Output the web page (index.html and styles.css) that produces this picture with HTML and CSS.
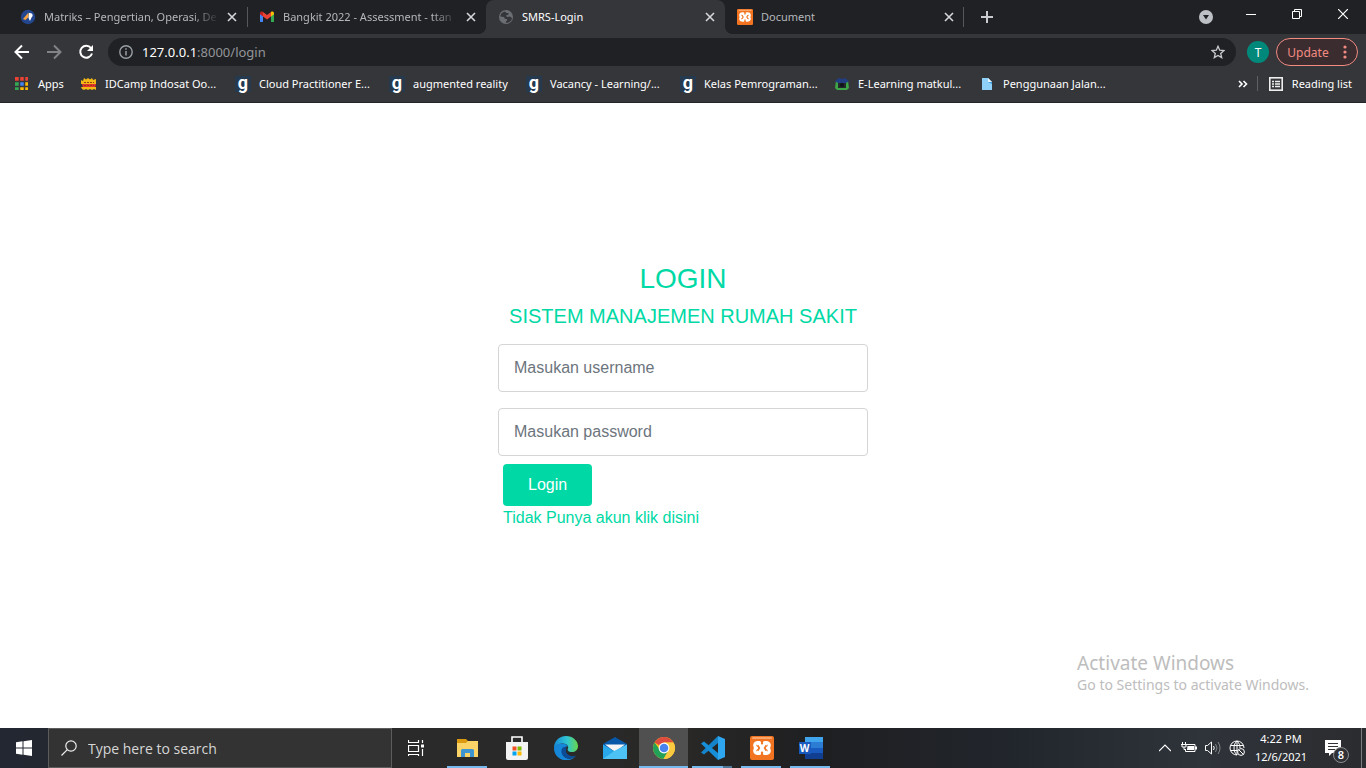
FILE: index.html
```html
<!DOCTYPE html>
<html lang="id">
<head>
<meta charset="utf-8">
<meta name="viewport" content="width=device-width, initial-scale=1">
<title>SMRS-Login</title>
<link rel="stylesheet" href="styles.css">
</head>
<body>
<svg class="defs" aria-hidden="true">
  <symbol id="close" viewBox="0 0 10 10"><path d="M1 1l8 8M9 1l-8 8" fill="none" stroke="currentColor" stroke-width="1.6"/></symbol>
  <symbol id="xampp" viewBox="0 0 24 24">
    <rect width="24" height="24" rx="2" fill="#f27421"/><rect x="2" y="1" width="20" height="2" rx="1" fill="#f9a66c"/>
    <path d="M8 7.200L16 16.800M16 7.200L8 16.800" stroke="#fff" stroke-width="4"/>
    <path d="M9.500 6.500H8C4 6.500 4 11 6.500 12C4 13 4 17.500 8 17.500H9.500M14.500 6.500H16C20 6.500 20 11 17.500 12C20 13 20 17.500 16 17.500H14.500" fill="none" stroke="#fff" stroke-width="3.200" stroke-linecap="round" stroke-linejoin="round"/>
    <path d="M8 9.500L9.500 12L8 14.500M16 9.500L14.500 12L16 14.500" fill="none" stroke="#f27421" stroke-width="1.400" stroke-linecap="round"/>
  </symbol>
</svg>

<header class="browser">
  <div class="tabstrip">
    <div class="tab">
      <svg class="icon16" viewBox="0 0 16 16"><circle cx="8" cy="8" r="7.200" fill="#23478f"/><path d="M3 10L8.500 3.500V8L5.500 11z" fill="#f7a440"/><path d="M9 4c4-.5 4.500 3 2.500 4.500L10 12 8.500 9z" fill="#fff"/></svg>
      <span class="tab-title tab-title--fade">Matriks – Pengertian, Operasi, De</span>
      <button class="tab-close" aria-label="Close tab"><svg class="icon10"><use href="#close"/></svg></button>
    </div>
    <div class="tab tab--split">
      <svg class="icon16" viewBox="0 0 16 16"><path d="M1 4v9h3V6z" fill="#4285f4"/><path d="M12 6v7h3V4z" fill="#34a853"/><path d="M1 4.500C1 2.500 3 2.200 4 3v4.500L1 5.200z" fill="#c5221f"/><path d="M15 4.500C15 2.500 13 2.200 12 3v4.500l3-2.300z" fill="#fbbc04"/><path d="M4 3l4 3 4-3v4.500l-4 3-4-3z" fill="#ea4335"/></svg>
      <span class="tab-title tab-title--fade">Bangkit 2022 - Assessment - ttan</span>
      <button class="tab-close" aria-label="Close tab"><svg class="icon10"><use href="#close"/></svg></button>
    </div>
    <div class="tab tab--active">
      <svg class="icon16" viewBox="0 0 16 16"><circle cx="8" cy="8" r="7" fill="#6b6e73"/><path d="M7 2.500C4 3 2.500 5 2.300 7.500L6 8l1 2h2v1.500L7.500 13l1 1c3-.2 5.300-2 5.500-5l-2-1.500L9 8 8 6.500l2.500-1V4H8.500z" fill="#35363a"/><path d="M3 8.500L6.500 12v1.500" stroke="#6b6e73" fill="none"/></svg>
      <span class="tab-title">SMRS-Login</span>
      <button class="tab-close" aria-label="Close tab"><svg class="icon10"><use href="#close"/></svg></button>
    </div>
    <div class="tab tab--last">
      <svg class="icon16"><use href="#xampp"/></svg>
      <span class="tab-title">Document</span>
      <button class="tab-close" aria-label="Close tab"><svg class="icon10"><use href="#close"/></svg></button>
    </div>
    <button class="new-tab" aria-label="New tab"><svg class="icon12" viewBox="0 0 12 12"><path d="M6 0v12M0 6h12" stroke="#c8cacd" stroke-width="2"/></svg></button>
    <div class="window-controls">
      <button class="tab-search" aria-label="Search tabs"><svg class="icon14" viewBox="0 0 14 14"><circle cx="7" cy="7" r="7" fill="#bdc1c6"/><path d="M4 5h6L7 9.500z" fill="#202124"/></svg></button>
      <button class="window-btn" aria-label="Minimize"><svg class="icon10" viewBox="0 0 10 10"><path d="M0 5.500h10" stroke="#fff"/></svg></button>
      <button class="window-btn" aria-label="Restore"><svg class="icon10" viewBox="0 0 10 10"><path d="M.5 2.500h7v7h-7zM2.500 2.500v-2h7v7h-2" fill="none" stroke="#fff"/></svg></button>
      <button class="window-btn" aria-label="Close"><svg class="icon10" viewBox="0 0 10 10"><path d="M0 0l10 10M10 0L0 10" stroke="#fff" stroke-width="1.200"/></svg></button>
    </div>
  </div>

  <div class="toolbar">
    <button class="nav-btn" aria-label="Back"><svg class="icon16" viewBox="0 0 16 16"><path d="M15 8H2M8 1.500L1.500 8 8 14.500" fill="none" stroke="#fff" stroke-width="2"/></svg></button>
    <button class="nav-btn" aria-label="Forward"><svg class="icon16" viewBox="0 0 16 16"><path d="M1 8h13M8 1.500L14.500 8 8 14.500" fill="none" stroke="#828386" stroke-width="2"/></svg></button>
    <button class="nav-btn" aria-label="Reload"><svg class="icon16" viewBox="0 0 16 16"><path d="M13 4A6 6 0 1 0 14 9.500" fill="none" stroke="#fff" stroke-width="2"/><path d="M15 1v6H9z" fill="#fff"/></svg></button>
    <div class="omnibox">
      <svg class="icon14" viewBox="0 0 14 14"><circle cx="7" cy="7" r="6.200" fill="none" stroke="#9aa0a6" stroke-width="1.400"/><path d="M7 6v4.500M7 3.200v1.500" stroke="#9aa0a6" stroke-width="1.500"/></svg>
      <span class="url"><span class="url-host">127.0.0.1</span>:8000/login</span>
      <button class="star" aria-label="Bookmark this tab"><svg class="icon14" viewBox="0 0 14 14"><path d="M7 1.300l1.700 3.900 4.200.4-3.200 2.800 1 4.200L7 10.400l-3.700 2.200 1-4.200L1.100 5.600l4.200-.4z" fill="none" stroke="#c8cacd" stroke-width="1.300"/></svg></button>
    </div>
    <button class="avatar">T</button>
    <button class="update">Update<svg class="dots" viewBox="0 0 4 14"><g fill="#f28b82"><circle cx="2" cy="2" r="1.600"/><circle cx="2" cy="7" r="1.600"/><circle cx="2" cy="12" r="1.600"/></g></svg></button>
  </div>

  <nav class="bookmarks" aria-label="Bookmarks">
    <a class="bookmark bookmark--apps" href="#"><svg class="icon16" viewBox="0 0 16 16"><path d="M1 1h4v4H1zM6 1h4v4H6zM11 1h3v4h-3z" fill="#ea4335"/><path d="M1 6h4v4H1zM1 11h4v3H1z" fill="#34a853"/><path d="M6 6h4v4H6z" fill="#4285f4"/><path d="M11 6h3v4h-3zM6 11h4v3H6zM11 11h3v3h-3z" fill="#fbbc04"/><path d="M5.500 0v16M10.500 0v16M0 5.500h16M0 10.500h16" stroke="#35363a" stroke-width="1.500"/></svg>Apps</a>
    <a class="bookmark" href="#"><svg class="icon16" viewBox="0 0 16 16"><path d="M0 4l2 1 1-3 2 1.500L7 2l2 1.500L11 2l1 2 3-1v5H0z" fill="#f5b916"/><path d="M1 8h14l-1 4H2z" fill="#e3342f"/><path d="M0 11h15v3l-2-1-2 1-2-1-2 1-2-1-2 1-2-1z" fill="#f5b916"/><path d="M3 6.500h10M3 9.500h10" stroke="#9c3a12" stroke-dasharray="2 1"/></svg>IDCamp Indosat Oo...</a>
    <a class="bookmark" href="#"><span class="g-mark" aria-hidden="true">g</span>Cloud Practitioner E...</a>
    <a class="bookmark bookmark--short" href="#"><span class="g-mark" aria-hidden="true">g</span>augmented reality</a>
    <a class="bookmark" href="#"><span class="g-mark" aria-hidden="true">g</span>Vacancy - Learning/...</a>
    <a class="bookmark" href="#"><span class="g-mark" aria-hidden="true">g</span>Kelas Pemrograman...</a>
    <a class="bookmark bookmark--medium" href="#"><svg class="icon16" viewBox="0 0 16 16"><path d="M2 5h12l1 7-2 2H3l-2-2z" fill="#3da447"/><path d="M4 6h8v6H4z" fill="#24282c"/><path d="M1 5l4-3 3 1 3-1 4 3-3 2H4z" fill="#233d83"/><circle cx="8" cy="9" r="2" fill="#101318"/></svg>E-Learning matkul...</a>
    <a class="bookmark" href="#"><svg class="icon16" viewBox="0 0 16 16"><path d="M3 2h6l4 4v8H3z" fill="#8ed0f8"/><path d="M9 2v4h4z" fill="#e4f5ff"/><path d="M9 6h4v2z" fill="#3c9ad6"/></svg>Penggunaan Jalan...</a>
    <div class="bookmarks-end">
      <button class="more" aria-label="More bookmarks"><svg class="icon10" viewBox="0 0 10 10"><path d="M1 2l3 3-3 3M5.500 2l3 3-3 3" fill="none" stroke="#fff" stroke-width="1.600"/></svg></button>
      <a class="reading" href="#"><svg class="icon14" viewBox="0 0 14 14"><rect x=".8" y=".8" width="12.400" height="12.400" fill="none" stroke="#eee" stroke-width="1.600"/><path d="M3 4.500h2M6 4.500h5M3 7h2M6 7h5M3 9.500h2M6 9.500h5" stroke="#eee" stroke-width="1.400"/></svg>Reading list</a>
    </div>
  </nav>
</header>

<main class="page">
  <form class="login">
    <h1 class="login-title">LOGIN</h1>
    <h2 class="login-subtitle">SISTEM MANAJEMEN RUMAH SAKIT</h2>
    <input class="field" type="text" placeholder="Masukan username" aria-label="Username">
    <input class="field" type="password" placeholder="Masukan password" aria-label="Password">
    <div class="actions">
      <button class="submit" type="button">Login</button>
      <a class="register" href="#">Tidak Punya akun klik disini</a>
    </div>
  </form>
  <aside class="watermark">
    <p class="watermark-title">Activate Windows</p>
    <p class="watermark-text">Go to Settings to activate Windows.</p>
  </aside>
</main>

<footer class="taskbar">
  <button class="start" aria-label="Start"><svg class="icon16" viewBox="0 0 16 16"><path d="M0 2.200L6.500 1.300v6.200H0zM7.500 1.200L16 0v7.500H7.500zM0 8.500h6.500v6.200L0 13.800zM7.500 8.500H16V16l-8.500-1.200z" fill="#fff"/></svg></button>
  <label class="search"><svg class="icon16" viewBox="0 0 16 16"><circle cx="10" cy="6" r="5.200" fill="none" stroke="#eee" stroke-width="1.200"/><path d="M6.300 9.700L.5 15.500" stroke="#eee" stroke-width="1.200"/></svg><input class="search-input" type="text" placeholder="Type here to search" aria-label="Search"></label>
  <button class="task-view" aria-label="Task view"><svg class="icon16" viewBox="0 0 16 16"><path d="M.5 0v2.500h10V0M.5 5.500h10v6H.5zM.5 16v-1.500h10V16M14.500 0v3M14.500 9v7" fill="none" stroke="#fff" stroke-width="1.200"/><path d="M13 4.500h3v3h-3z" fill="#fff"/></svg></button>
  <div class="apps">
    <button class="app app--open" aria-label="File Explorer"><svg class="icon24" viewBox="0 0 24 24"><path d="M1 3h9l2 2h10v4H1z" fill="#dc9a10"/><path d="M1 7h9l2-2h10v16H1z" fill="#fbd366"/><path d="M5 21v-6.500q0-1.500 1.500-1.500h10q1.500 0 1.500 1.500V21h-4v-4H9v4z" fill="#3e94d1"/></svg></button>
    <button class="app" aria-label="Microsoft Store"><svg class="icon24" viewBox="0 0 24 24"><path d="M7 7V1h10v6" fill="none" stroke="#fff" stroke-width="1.600"/><path d="M1 6h22v16q0 2-2 2H3q-2 0-2-2z" fill="#f3f3f3"/><path d="M7.500 10.500h4v4h-4z" fill="#f25022"/><path d="M12.500 10.500h4v4h-4z" fill="#7fba00"/><path d="M7.500 15.500h4v4h-4z" fill="#00a4ef"/><path d="M12.500 15.500h4v4h-4z" fill="#ffb900"/></svg></button>
    <button class="app" aria-label="Microsoft Edge"><svg class="icon24" viewBox="0 0 24 24"><defs><linearGradient id="edge"><stop stop-color="#168bd8"/><stop offset=".55" stop-color="#30c5d2"/><stop offset="1" stop-color="#68d649"/></linearGradient></defs><path d="M0 12C0 5 5 0 12 0s12 5 12 10c0 4-3 6-6 6-4 0-5-2-4-3.500 1-2-1-5-5-5-5 0-8 2.500-9 5z" fill="url(#edge)"/><path d="M0 12c1-3 4-4.500 8-4.500 3 0 5 1 6 3-5-1-8 6-4 10 3 3 8 3 12-1-2 3-6 5-10 5C5 24 0 19 0 12z" fill="#1687d8"/><path d="M10 11c-3 1-4 6 0 9.500 3 3 8 3 12-1-6 2-11-2-10-6 0-1 1-2 1-2z" fill="#0c4c97"/></svg></button>
    <button class="app" aria-label="Mail"><svg class="icon24" viewBox="0 0 24 24"><path d="M0 8L12 1l12 7v5H0z" fill="#0758a8"/><path d="M2 8.500h20L12 16z" fill="#f5f5f5"/><path d="M0 8.500l12 7 12-7V23H0z" fill="#28a8ea"/><path d="M0 23l12-8.500L24 8.500V23z" fill="#4dc2f4"/></svg></button>
    <button class="app app--active" aria-label="Google Chrome"><svg class="icon24" viewBox="0 0 24 24"><circle cx="12" cy="12" r="11" fill="#fbc116"/><path d="M12 12L2.500 6.500A11 11 0 0 1 21.500 6.500H12z" fill="#de4b3f"/><path d="M2.500 6.500A11 11 0 0 0 11.500 23l5-8.500L12 12 8 14z" fill="#24a158"/><path d="M12 6.500h9.500A11 11 0 0 1 11.500 23l5-8.500z" fill="#fbc940"/><circle cx="12" cy="12" r="5.400" fill="#fff"/><circle cx="12" cy="12" r="4.300" fill="#4a83ee"/></svg></button>
    <button class="app app--open app--stacked" aria-label="Visual Studio Code"><svg class="icon24" viewBox="0 0 24 24"><path d="M17 0l7 3v18l-7 3z" fill="#2ea7f0"/><path d="M17 0v7L3 18.500 0 16.500z" fill="#1584ca"/><path d="M17 24v-7L3 5.500 0 7.500z" fill="#168fd8"/></svg></button>
    <button class="app app--open" aria-label="XAMPP"><svg class="icon24"><use href="#xampp"/></svg></button>
    <button class="app app--open" aria-label="Word"><span class="word"><span class="word-letter">W</span></span></button>
  </div>
  <div class="tray">
    <button class="tray-btn" aria-label="Show hidden icons"><svg class="icon12" viewBox="0 0 12 12"><path d="M0 9l6-6 6 6" fill="none" stroke="#fff" stroke-width="1.200"/></svg></button>
    <button class="tray-btn" aria-label="Battery"><svg class="icon16" viewBox="0 0 16 16"><path d="M5.500 4.500H14v7H4.500V9" fill="none" stroke="#fff"/><path d="M6.500 6H13v4H6zM14 6.500h2v3h-2z" fill="#fff"/><path d="M1.500 2v3M4.500 2v3M0 4.500h6M1 5v2h4V5M3 7v2.500h2" fill="none" stroke="#fff"/></svg></button>
    <button class="tray-btn" aria-label="Volume"><svg class="icon16" viewBox="0 0 16 16"><path d="M.5 5.500h2l4-3.500v12l-4-3.500h-2z" fill="none" stroke="#fff"/><path d="M8.500 6q1.500 2 0 4" fill="none" stroke="#fff"/><path d="M10.500 4q3 4 0 8M13 2q4 6 0 12" fill="none" stroke="#858789"/></svg></button>
    <button class="tray-btn" aria-label="Network"><svg class="icon16" viewBox="0 0 16 16"><path d="M8 15A7 7 0 1 1 15 8M8 1C4 4 4 12 8 15M8 1c2.500 2 3 5 3 7M1.500 5.500h13M1.500 10.500H9M8 1v14" fill="none" stroke="#fff"/><circle cx="12" cy="12" r="3.400" fill="#2d3036" stroke="#fff"/><path d="M9.700 9.700l4.600 4.600" stroke="#fff"/></svg></button>
    <div class="clock"><span>4:22 PM</span><span>12/6/2021</span></div>
    <button class="notify" aria-label="Notifications"><svg class="icon16" viewBox="0 0 16 16"><path d="M0 0h16v13H7l-3 3v-3H0z" fill="#fff"/><path d="M3 3.500h10M3 6.500h10M3 9.500h7" stroke="#303236"/></svg><span class="badge">8</span></button>
  </div>
</footer>
</body>
</html>
```
FILE: styles.css
```css
* {
  box-sizing: border-box;
}

body {
  margin: 0;
  min-height: 100vh;
  display: flex;
  flex-direction: column;
  background: #fff;
  font-family: "Noto Sans", "Open Sans", sans-serif;
  font-size: 11px;
}

button {
  display: flex;
  align-items: center;
  justify-content: center;
  padding: 0;
  border: 0;
  background: none;
  color: inherit;
  font: inherit;
}

a {
  color: inherit;
  text-decoration: none;
}

svg {
  display: block;
  flex: none;
}

.defs {
  position: absolute;
  width: 0;
  height: 0;
}

.icon10 { width: 10px; height: 10px; }
.icon12 { width: 12px; height: 12px; }
.icon14 { width: 14px; height: 14px; }
.icon16 { width: 16px; height: 16px; }
.icon24 { width: 24px; height: 24px; }

/* Browser chrome */
.browser {
  background: #35363a;
  color: #fff;
  border-bottom: 1px solid #242528;
}

.tabstrip {
  display: flex;
  height: 34px;
  padding-left: 8px;
  background: #202124;
}

.tab {
  position: relative;
  display: flex;
  flex: 0 1 239px;
  align-items: center;
  gap: 8px;
  min-width: 0;
  padding: 0 10px 0 12px;
  color: #b4b7bb;
}

.tab--split::before,
.tab--last::after {
  content: "";
  position: absolute;
  top: 7px;
  width: 1px;
  height: 20px;
  background: #55575b;
}

.tab--split::before { left: 0; }
.tab--last::after { right: 0; }

.tab--active {
  background: #35363a;
  border-radius: 8px 8px 0 0;
  color: #fff;
}

.tab--active::before,
.tab--active::after {
  content: "";
  position: absolute;
  bottom: 0;
  width: 8px;
  height: 8px;
}

.tab--active::before {
  left: -8px;
  background: radial-gradient(circle at 0 0, transparent 8px, #35363a 8px);
}

.tab--active::after {
  right: -8px;
  background: radial-gradient(circle at 100% 0, transparent 8px, #35363a 8px);
}

.tab-title {
  flex: 1;
  min-width: 0;
  padding-bottom: 2px;
  overflow: hidden;
  white-space: nowrap;
}

.tab-title--fade {
  mask-image: linear-gradient(to right, #000 85%, transparent);
}

.tab-close { color: #d5d7da; }

.new-tab { width: 46px; }

.window-controls {
  display: flex;
  align-items: flex-start;
  margin-left: auto;
}

.tab-search {
  width: 44px;
  height: 34px;
}

.window-btn {
  width: 46px;
  height: 28px;
}

.toolbar {
  display: flex;
  align-items: center;
  height: 36px;
  padding: 0 8px 0 6px;
}

.nav-btn {
  width: 32px;
  height: 28px;
}

.omnibox {
  display: flex;
  flex: 1;
  align-items: center;
  gap: 9px;
  height: 28px;
  margin-left: 6px;
  padding: 0 11px;
  border-radius: 14px;
  background: #202124;
}

.url {
  flex: 1;
  color: #929599;
  font-size: 13px;
}

.url-host { color: #fff; }

.avatar {
  width: 22px;
  height: 22px;
  margin: 0 7px 0 11px;
  border-radius: 50%;
  background: #00897b;
  font-size: 12px;
}

.update {
  gap: 14px;
  width: 82px;
  height: 28px;
  border: 1px solid #f28b82;
  border-radius: 14px;
  background: #3b2c2f;
  color: #f28b82;
  font-size: 12px;
}

.dots {
  width: 4px;
  height: 14px;
}

.bookmarks {
  display: flex;
  align-items: center;
  height: 32px;
  padding: 0 14px 5px 14px;
}

.bookmark {
  display: flex;
  flex: 0 1 154px;
  align-items: center;
  gap: 8px;
  white-space: nowrap;
}

.bookmark--apps { flex-basis: 67px; }
.bookmark--short { flex-basis: 137px; }
.bookmark--medium { flex-basis: 145px; }

.g-mark {
  width: 16px;
  height: 16px;
  background: #263a4f;
  font: 700 18px/14px Roboto, sans-serif;
  text-align: center;
}

.bookmarks-end {
  display: flex;
  align-items: center;
  margin-left: auto;
}

.more { margin-right: 9px; }

.reading {
  display: flex;
  align-items: center;
  gap: 9px;
  padding-left: 11px;
  border-left: 1px solid #5f6064;
  white-space: nowrap;
}

/* Login page */
.page {
  position: relative;
  display: flex;
  flex: 1;
  align-items: center;
  justify-content: center;
  padding: 0 16px 40px;
  color: #00d9a5;
  font: 16px/24px "Liberation Sans", Arial, sans-serif;
}

.login {
  display: flex;
  flex-direction: column;
  width: 100%;
  max-width: 370px;
}

.login-title,
.login-subtitle {
  margin: 0 0 8px;
  font-weight: 400;
  text-align: center;
}

.login-title {
  font-size: 28px;
  line-height: 34px;
}

.login-subtitle {
  margin-bottom: 16px;
  font-size: 20px;
  line-height: 24px;
}

.field {
  width: 100%;
  height: 48px;
  margin-bottom: 16px;
  padding: 0 15px;
  border: 1px solid #d5d5d5;
  border-radius: 4px;
  background: #fff;
  font: inherit;
}

.field::placeholder { color: #6c757d; }

.actions {
  display: flex;
  flex-direction: column;
  align-items: flex-start;
  margin-top: -8px;
  padding-left: 5px;
}

.submit {
  height: 42px;
  padding: 0 25px;
  border-radius: 4px;
  background: #00d9a5;
  color: #fff;
}

.watermark {
  position: absolute;
  right: 57px;
  bottom: 33px;
  color: #bdbdbd;
  font-family: "Noto Sans", sans-serif;
}

.watermark p { margin: 0; }

.watermark-title {
  font-size: 19px;
  line-height: 24px;
}

.watermark-text {
  font-size: 14px;
  line-height: 20px;
}

/* Taskbar */
.taskbar {
  display: flex;
  height: 40px;
  background: linear-gradient(to right, #232731, #2a2a2b 30%, #292827 50%, #1e1f21 60%, #22262d 75%, #2f333a 88%, #2b2c2f);
  color: #fff;
}

.start { width: 48px; }

.search {
  display: flex;
  flex: 0 1 344px;
  align-items: center;
  gap: 11px;
  padding-left: 12px;
  border: 1px solid #5c5c5c;
  background: #333;
}

.search-input {
  flex: 1;
  min-width: 0;
  padding: 0;
  border: 0;
  background: none;
  color: #fff;
  font: 14px "Open Sans", sans-serif;
}

.search-input::placeholder { color: #d6d6d6; }

.task-view {
  width: 48px;
  margin-right: 3px;
}

.apps { display: flex; }

.app {
  position: relative;
  width: 49px;
  height: 40px;
}

.app--active {
  background: #505050;
  border-bottom: 2px solid #76b9ed;
  padding-top: 2px;
}

.app--open::after {
  content: "";
  position: absolute;
  right: 5px;
  bottom: 0;
  left: 4px;
  height: 2px;
  background: #76b9ed;
}

.app--stacked::after {
  background: linear-gradient(to right, #76b9ed 78%, #4f7898 78%);
}

.word {
  display: flex;
  align-items: center;
  width: 24px;
  height: 22px;
  padding-right: 12px;
  background: linear-gradient(#41a5ee 25%, #2b7cd3 25% 50%, #185abd 50% 75%, #103f91 75%) right / 18px 100% no-repeat;
}

.word-letter {
  flex: none;
  width: 12px;
  height: 12px;
  background: #185abd;
  font-size: 10px;
  font-weight: 700;
  line-height: 12px;
  text-align: center;
}

.tray {
  display: flex;
  align-items: center;
  margin-left: auto;
  margin-right: 4px;
  border-right: 1px solid #7a7b7d;
}

.tray-btn {
  width: 24px;
  height: 40px;
}

.clock {
  display: flex;
  flex-direction: column;
  align-items: center;
  width: 64px;
  line-height: 18px;
}

.notify {
  position: relative;
  width: 48px;
  height: 40px;
  padding-right: 8px;
}

.badge {
  position: absolute;
  right: 12px;
  bottom: 5px;
  width: 16px;
  height: 16px;
  border: 1px solid #8c8d8f;
  border-radius: 50%;
  background: #303236;
  font-weight: 600;
  line-height: 14px;
  text-align: center;
}
```
